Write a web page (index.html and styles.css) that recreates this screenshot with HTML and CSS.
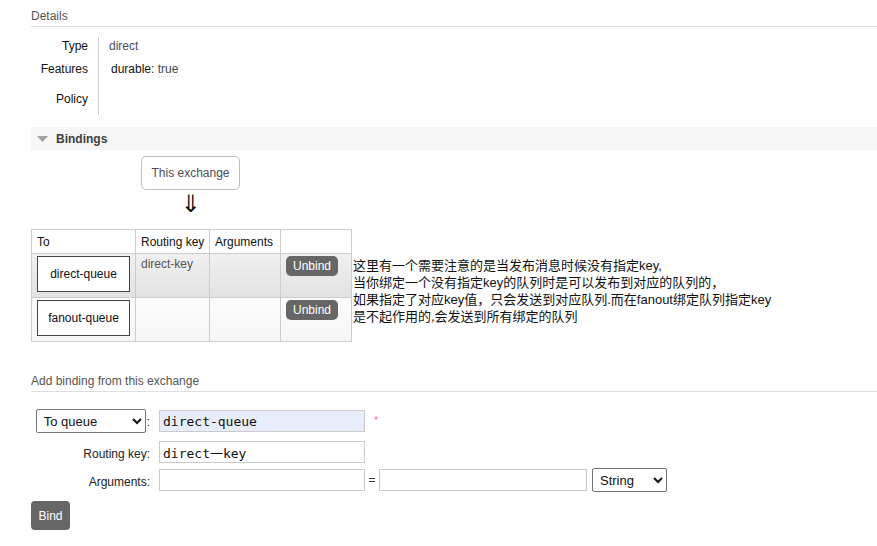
FILE: index.html
```html
<!DOCTYPE html>
<html lang="zh">
<head>
<meta charset="utf-8">
<title>Exchange</title>
<link rel="stylesheet" href="styles.css">
</head>
<body>
<div class="main">
  <h2 class="section-title">Details</h2>
  <div class="facts">
    <div class="fact fact-type">
      <div class="fact-label">Type</div>
      <div class="fact-value value-muted">direct</div>
    </div>
    <div class="fact fact-features">
      <div class="fact-label">Features</div>
      <div class="fact-value"><span class="feature">durable: <abbr class="feature-val">true</abbr></span></div>
    </div>
    <div class="fact fact-policy">
      <div class="fact-label">Policy</div>
      <div class="fact-value"></div>
    </div>
  </div>

  <div class="section-bar">
    <svg class="bar-triangle" width="11" height="6" viewBox="0 0 11 6"><polygon points="0,0 11,0 5.5,6" fill="#a0a0a0"/></svg>
    <span class="bar-title">Bindings</span>
  </div>

  <div class="this-exchange">This exchange</div>
  <div class="down-arrow">⇓</div>

  <div class="bindings-area">
    <table class="list">
      <thead>
        <tr>
          <th class="col-to">To</th>
          <th class="col-key">Routing key</th>
          <th class="col-args">Arguments</th>
          <th class="col-act"></th>
        </tr>
      </thead>
      <tbody>
        <tr class="alt1">
          <td><div class="queue-box">direct-queue</div></td>
          <td class="key-cell">direct-key</td>
          <td></td>
          <td><button class="btn-small">Unbind</button></td>
        </tr>
        <tr class="alt2">
          <td><div class="queue-box">fanout-queue</div></td>
          <td class="key-cell"></td>
          <td></td>
          <td><button class="btn-small">Unbind</button></td>
        </tr>
      </tbody>
    </table>
    <div class="note">这里有一个需要注意的是当发布消息时候没有指定key,<br>当你绑定一个没有指定key的队列时是可以发布到对应的队列的，<br>如果指定了对应key值，只会发送到对应队列.而在fanout绑定队列指定key<br>是不起作用的,会发送到所有绑定的队列</div>
  </div>

  <h2 class="section-title add-title">Add binding from this exchange</h2>
  <form class="bind-form">
    <div class="form-row row-dest">
      <div class="form-label"><select class="sel sel-dest"><option>To queue</option><option>To exchange</option></select>:</div>
      <div class="form-field">
        <input class="text-input mono autofilled" type="text" value="direct-queue">
        <span class="mand">*</span>
      </div>
    </div>
    <div class="form-row row-key">
      <div class="form-label text-label">Routing key:</div>
      <div class="form-field">
        <input class="text-input mono" type="text" value="direct一key">
      </div>
    </div>
    <div class="form-row row-args">
      <div class="form-label text-label">Arguments:</div>
      <div class="form-field">
        <input class="text-input" type="text">
        <span class="equals">=</span>
        <input class="text-input arg-val" type="text">
        <select class="sel sel-type"><option>String</option><option>Number</option><option>Boolean</option></select>
      </div>
    </div>
    <button type="button" class="btn-bind">Bind</button>
  </form>
</div>
</body>
</html>
```
FILE: styles.css
```css
* { box-sizing: border-box; }
html, body { margin: 0; padding: 0; background: #fff; }
body {
  font-family: "Liberation Sans", Arial, "Noto Sans CJK SC", sans-serif;
  font-size: 12px;
  color: #484848;
}
.main { padding: 8px 0 0 31px; }

.section-title {
  margin: 0;
  font-size: 12px;
  font-weight: normal;
  line-height: 17px;
  padding-bottom: 1px;
  border-bottom: 1px solid #dedede;
  color: #555;
}

.facts { margin-top: 10px; }
.fact { display: flex; }
.fact-label {
  width: 57px;
  text-align: right;
  color: #111;
  line-height: 18px;
}
.fact-value {
  margin-left: 10px;
  padding-left: 10px;
  border-left: 1px solid #cfcfcf;
  line-height: 18px;
  color: #222;
}
.fact-type { height: 23px; }
.fact-features { height: 30px; }
.fact-policy { height: 25px; }
.value-muted { color: #4e4a63; }
.feature { margin-left: 2px; color: #111; }
.feature-val { text-decoration: none; color: #444; border-bottom: 1px dotted #ddd; }

.section-bar {
  margin-top: 12px;
  height: 23px;
  background: #f6f6f6;
  display: flex;
  align-items: center;
  padding-left: 6px;
}
.bar-triangle { margin-right: 8px; margin-top: 1px; }
.bar-title { font-weight: bold; color: #3f3f3f; }

.this-exchange {
  margin: 6px 0 0 110px;
  width: 99px;
  height: 34px;
  border: 1px solid #bdbdbd;
  border-radius: 5px;
  display: flex;
  align-items: center;
  justify-content: center;
  color: #4d4d5a;
}
.down-arrow {
  margin-left: 110px;
  width: 99px;
  text-align: center;
  font-family: "DejaVu Sans", sans-serif;
  font-size: 24px;
  line-height: 28px;
  color: #111;
}

.bindings-area {
  margin-top: 11px;
  display: flex;
  align-items: flex-start;
}
table.list {
  border-collapse: collapse;
  table-layout: fixed;
  width: 321px;
}
table.list th, table.list td {
  border: 1px solid #cccccc;
  text-align: left;
  vertical-align: top;
}
table.list th {
  font-weight: normal;
  color: #111;
  height: 24px;
  padding: 0 4px 0 5px;
  vertical-align: middle;
  background: #fff;
  white-space: nowrap;
  overflow: hidden;
}
.col-to { width: 104px; }
.col-key { width: 74px; }
.col-args { width: 71px; }
.col-act { width: 71px; }
table.list td { padding: 2px 5px 3px 5px; height: 44px; }
tr.alt1 { background: linear-gradient(to bottom, #f0f0f0, #e2e2e2); }
tr.alt2 { background: linear-gradient(to bottom, #fcfcfc, #f5f5f5); }
.key-cell { color: #555; line-height: 16px; }
.queue-box {
  width: 93px;
  height: 36px;
  border: 1px solid #444;
  background: #fff;
  display: flex;
  align-items: center;
  justify-content: center;
  color: #111;
}
.btn-small {
  width: 52px;
  height: 20px;
  border: none;
  border-radius: 5px;
  background: #666;
  color: #fff;
  font-family: "Liberation Sans", Arial, sans-serif;
  font-size: 12px;
  padding: 0;
}

.note {
  margin-top: 28px;
  padding-left: 1px;
  font-size: 13px;
  line-height: 17px;
  color: #111;
  white-space: nowrap;
}

.add-title { margin-top: 31px; }

.bind-form { margin-top: 17px; }
.form-row { display: flex; align-items: center; }
.row-dest { height: 24px; }
.row-key { height: 22px; margin-top: 8px; }
.row-args { height: 24px; margin-top: 5px; }
.form-label {
  width: 119px;
  text-align: right;
  color: #222;
  white-space: nowrap;
}
.text-label { padding-top: 4px; }
.form-field {
  margin-left: 9px;
  display: flex;
  align-items: center;
}
.text-input {
  width: 206px;
  height: 22px;
  border: 1px solid #cacaca;
  padding: 0 3px;
  background: #fff;
  font-family: "Liberation Sans", Arial, sans-serif;
  font-size: 12px;
  color: #111;
}
.mono { font-family: "DejaVu Sans Mono", "Noto Sans CJK SC", monospace; font-size: 13px; }
.autofilled { background: #e8edfb; }
.arg-val { width: 208px; }
.mand { margin-left: 9px; color: #f78; font-size: 11px; align-self: flex-start; margin-top: 4px; }
.equals { width: 14px; text-align: center; color: #333; }
.sel {
  height: 24px;
  font-family: "Liberation Sans", Arial, sans-serif;
  font-size: 13px;
  color: #111;
  background: #fff;
  border: 1px solid #767676;
  border-radius: 2px;
  padding-left: 3px;
}
.sel-dest { width: 110px; margin-right: 1px; }
.sel-type { width: 75px; margin-left: 5px; }

.btn-bind {
  display: block;
  margin-top: 9px;
  width: 39px;
  height: 29px;
  border: none;
  border-radius: 4px;
  background: #666;
  color: #fff;
  font-family: "Liberation Sans", Arial, sans-serif;
  font-size: 12px;
  padding: 0;
}
```
